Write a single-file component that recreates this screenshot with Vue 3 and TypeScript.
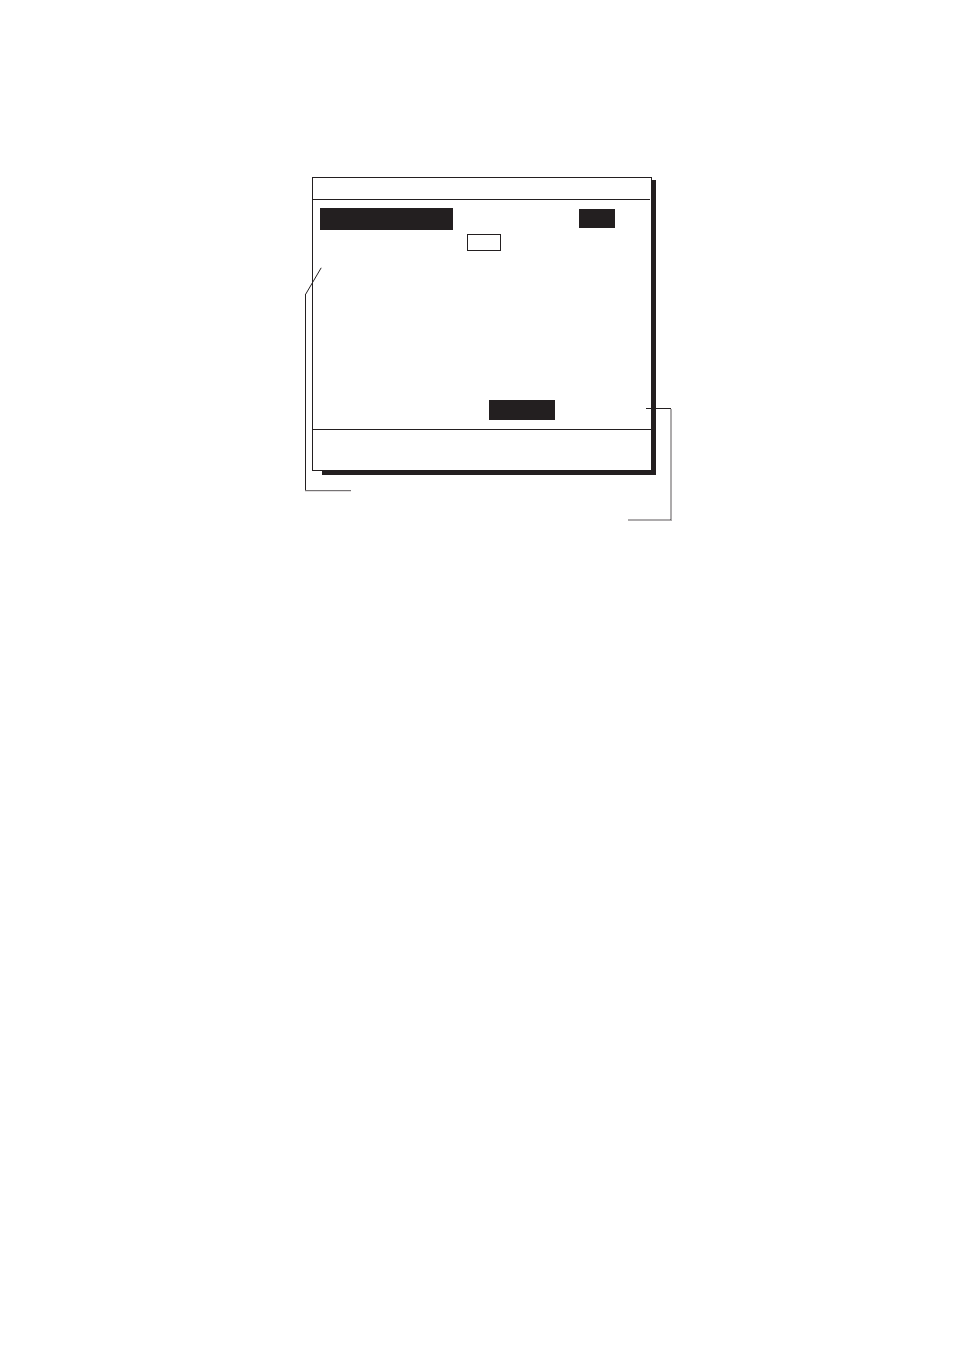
<script setup lang="ts">
const ink = '#231f20'
const paleInk = '#adabac'
</script>

<template>
  <main class="page">
    <figure class="diagram">
      <section class="panel">
        <header class="panel-head"></header>
        <div class="panel-body">
          <div class="row">
            <span class="block title-block"></span>
            <span class="block status-block"></span>
          </div>
          <div class="row field-row">
            <span class="field-frame"></span>
          </div>
          <div class="row action-row">
            <span class="block action-block"></span>
          </div>
        </div>
        <footer class="panel-foot"></footer>
      </section>
      <svg class="leaders" width="368" height="256" viewBox="0 0 368 256" fill="none" aria-hidden="true">
        <path d="M17.2 2.8 1.5 29.5" :stroke="ink" stroke-width="1" />
        <path d="M1.5 29V226" :stroke="ink" stroke-width="1" />
        <path d="M1 225.5H47" stroke="#767374" stroke-width="1" />
        <path d="M1 226.5H47" stroke="#e2e0e1" stroke-width="1" />
        <path d="M342 143.5H367" :stroke="ink" stroke-width="1" />
        <path d="M367 144V255H324" :stroke="paleInk" stroke-width="2" />
        <path d="M366 254.5H367" stroke="#6d6a6b" stroke-width="1" />
      </svg>
    </figure>
  </main>
</template>

<style>
body {
  margin: 0;
  background: #ffffff;
}
</style>

<style scoped>
.page {
  box-sizing: border-box;
  min-height: 100vh;
  padding: 177px 0 0 10px;
  font-family: "Liberation Sans", Arial, sans-serif;
}

.diagram {
  position: relative;
  z-index: 0;
  box-sizing: border-box;
  width: 340px;
  margin: 0 auto;
}

.panel {
  display: flex;
  flex-direction: column;
  border: 1px solid #231f20;
  background: #ffffff;
}

.panel::before {
  content: "";
  position: absolute;
  z-index: -1;
  inset: 3px -4px -4px 10px;
  background: #231f20;
}

.panel-head {
  height: 21px;
  margin-right: 1px;
  border-bottom: 1px solid #231f20;
}

.panel-body {
  display: flex;
  flex-direction: column;
  box-sizing: border-box;
  min-height: 229px;
  padding: 8px 36px 9px 7px;
}

.row {
  display: flex;
  align-items: flex-start;
  justify-content: space-between;
}

.block {
  background: #231f20;
}

.title-block {
  width: 133px;
  height: 22px;
}

.status-block {
  width: 36px;
  height: 19px;
  margin-top: 1px;
}

.field-row {
  margin-top: 4px;
  padding-left: 147px;
}

.field-frame {
  box-sizing: border-box;
  width: 34px;
  height: 17px;
  border: 1px solid #231f20;
}

.action-row {
  justify-content: flex-end;
  margin-top: auto;
  padding-right: 60px;
}

.action-block {
  width: 66px;
  height: 20px;
}

.panel-foot {
  height: 40px;
  border-top: 1px solid #231f20;
}

.leaders {
  position: absolute;
  top: 88px;
  left: -8px;
  pointer-events: none;
}
</style>
